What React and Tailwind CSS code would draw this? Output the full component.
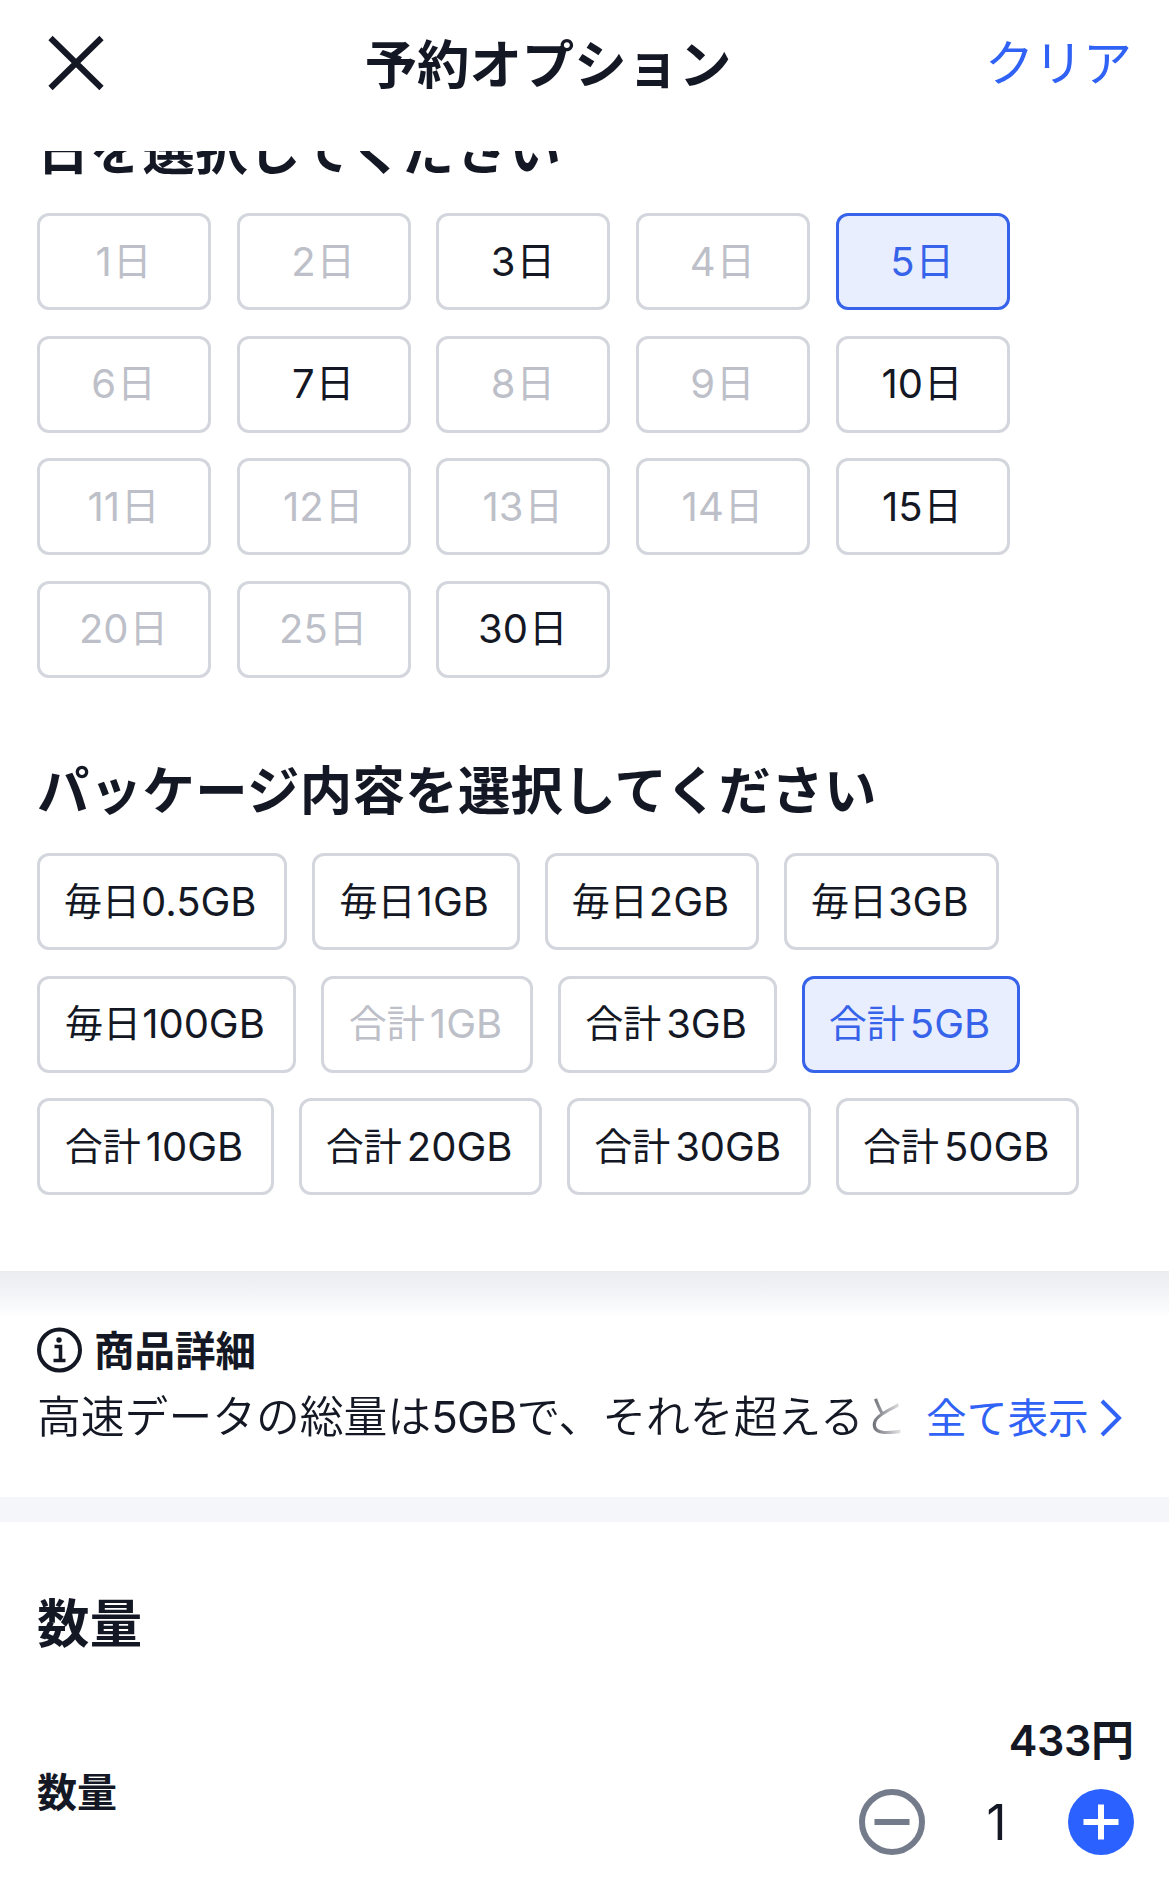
import React, { useState } from 'react';

const days = [1, 2, 3, 4, 5, 6, 7, 8, 9, 10, 11, 12, 13, 14, 15, 20, 25, 30];
const availableDays = [3, 5, 7, 10, 15, 30];

const packages = [
  { period: '毎日', size: '0.5GB', width: 'w-[249.5px]' },
  { period: '毎日', size: '1GB', width: 'w-[208.5px]' },
  { period: '毎日', size: '2GB', width: 'w-[214px]' },
  { period: '毎日', size: '3GB', width: 'w-[214.5px]' },
  { period: '毎日', size: '100GB', width: 'w-[259px]' },
  { period: '合計', size: '1GB', width: 'w-[212px]', disabled: true },
  { period: '合計', size: '3GB', width: 'w-[219px]' },
  { period: '合計', size: '5GB', width: 'w-[218px]' },
  { period: '合計', size: '10GB', width: 'w-[237px]' },
  { period: '合計', size: '20GB', width: 'w-[243.3px]' },
  { period: '合計', size: '30GB', width: 'w-[243.7px]' },
  { period: '合計', size: '50GB', width: 'w-[243.5px]' },
];

const Chip = ({ selected, disabled, className, onClick, children }) => {
  let colors = 'border-[#d4d6dd] text-[#141824]';
  if (disabled) colors = 'border-[#d4d6dd] text-[#bdc0c8]';
  if (selected) colors = 'border-[#3663e9] bg-[#e9eefe] text-[#3663e9]';

  return (
    <button
      disabled={disabled}
      onClick={onClick}
      className={`flex h-[97px] shrink-0 items-center justify-center rounded-[12px] border-[3px] leading-[48px] whitespace-nowrap ${className} ${colors}`}
    >
      {children}
    </button>
  );
};

const Heading = ({ children }) => (
  <h2 className="text-[52.4px] leading-[60px] font-semibold tracking-[0.35px] whitespace-nowrap">{children}</h2>
);

const App = () => {
  const [day, setDay] = useState(5);
  const [pack, setPack] = useState('合計5GB');
  const [count, setCount] = useState(1);

  return (
    <div className="flex h-[1890px] w-[1169px] flex-col overflow-hidden bg-white font-['Inter','Noto_Sans_CJK_JP',sans-serif] text-[#141824]">
      {/* Header */}
      <header className="flex h-[151px] shrink-0 items-start justify-between pr-[37px] pl-[48px]">
        <button className="mt-[35px]">
          <svg width="56" height="56" viewBox="0 0 56 56" fill="none" stroke="currentColor" strokeWidth="6">
            <path d="M2.5 3L53.5 53M53.5 3L2.5 53" />
          </svg>
        </button>
        <h1 className="mt-[35px] ml-[7px] text-[52.4px] leading-[60px] font-semibold">予約オプション</h1>
        <button className="mt-[34px] text-[49px] leading-[60px] text-[#2f62f5]">クリア</button>
      </header>

      {/* Options, scrolled a little under the header */}
      <main className="h-[1120px] shrink-0 overflow-hidden pl-[37px]">
        <div className="-mt-[30px]">
          <Heading>日を選択してください</Heading>
        </div>
        <div className="mt-[32px] grid w-[974px] grid-cols-[repeat(5,174px)] gap-x-[25.65px] gap-y-[25.6px]">
          {days.map((d) => (
            <Chip
              key={d}
              className="gap-[1px] pr-[1px]"
              selected={day === d}
              disabled={!availableDays.includes(d)}
              onClick={() => setDay(d)}
            >
              <span className="text-[40px]">{d}</span>
              <span className="pb-[2px] text-[38.5px]">日</span>
            </Chip>
          ))}
        </div>

        <div className="mt-[83px]">
          <Heading>パッケージ内容を選択してください</Heading>
        </div>
        <div className="mt-[32.4px] flex flex-wrap gap-x-[25px] gap-y-[25.6px] pr-[40px]">
          {packages.map(({ period, size, width, disabled }) => (
            <Chip
              key={period + size}
              className={`pr-[3px] ${width} ${period === '合計' ? 'gap-[5px]' : 'gap-[1px]'}`}
              selected={pack === period + size}
              disabled={disabled}
              onClick={() => setPack(period + size)}
            >
              <span className="pb-[2px] text-[38px]">{period}</span>
              <span className="text-[40px]">{size}</span>
            </Chip>
          ))}
        </div>
      </main>

      {/* Product details */}
      <section className="h-[226px] shrink-0 bg-[linear-gradient(to_bottom,#ebecef_0px,#f3f4f7_22px,#fafbfc_38px,#ffffff_46px)] pt-[55px] pl-[37px]">
        <div className="flex items-center gap-[11px]">
          <svg className="-mt-[3px]" width="46" height="46" viewBox="0 0 46 46" fill="none" stroke="currentColor">
            <circle cx="22.5" cy="23" r="20.5" strokeWidth="4" />
            <circle cx="22" cy="13" r="2.7" fill="currentColor" stroke="none" />
            <path d="M17.5 19.5H23.5V34M16.5 33.5H28.5" strokeWidth="3.6" />
          </svg>
          <h3 className="mt-[2px] text-[40.5px] leading-[48px] font-semibold">商品詳細</h3>
        </div>
        <div className="mt-[13px] flex items-center">
          <p className="w-[870px] shrink-0 text-[43.8px] leading-[56px] font-[350] whitespace-nowrap [mask-image:linear-gradient(to_right,black_815px,transparent_870px)]">
            高速データの総量は<span className="font-normal tracking-[-0.9px]">5GB</span>で、それを超えると
          </p>
          <button className="ml-[19px] flex items-center gap-[10px] pt-[2px] text-[40.7px] leading-[56px] whitespace-nowrap text-[#2f62f5]">
            全て表示
            <svg className="-mt-[3px]" width="24" height="40" viewBox="0 0 24 40" fill="none" stroke="currentColor" strokeWidth="4">
              <path d="M3 3L20 20L3 37" />
            </svg>
          </button>
        </div>
      </section>

      <div className="h-[25px] shrink-0 bg-[#f4f6fa]" />

      {/* Quantity */}
      <section className="pt-[72px] pr-[35px] pl-[37px]">
        <Heading>数量</Heading>
        <div className="mt-[58px] flex items-center justify-between">
          <h3 className="mt-[18px] text-[40px] leading-[48px] font-semibold">数量</h3>
          <div className="w-[275px]">
            <div className="text-right text-[43px] leading-[56px] font-semibold">
              <span className="tracking-[-0.4px]">433</span>円
            </div>
            <div className="mt-[21px] flex items-center justify-between">
              <button onClick={() => setCount(Math.max(1, count - 1))}>
                <svg width="66" height="66" viewBox="0 0 66 66" fill="none" stroke="#747b8b" strokeWidth="6">
                  <circle cx="33" cy="33" r="30" />
                  <path d="M15.5 33H50.5" />
                </svg>
              </button>
              <span className="mt-[2px] text-[49px] leading-[60px]">{count}</span>
              <button onClick={() => setCount(count + 1)}>
                <svg width="66" height="66" viewBox="0 0 66 66" fill="none" stroke="white" strokeWidth="6">
                  <circle cx="33" cy="33" r="33" fill="#2b62ff" stroke="none" />
                  <path d="M15.5 33H50.5M33 15.5V50.5" />
                </svg>
              </button>
            </div>
          </div>
        </div>
      </section>
    </div>
  );
};

export default App;
